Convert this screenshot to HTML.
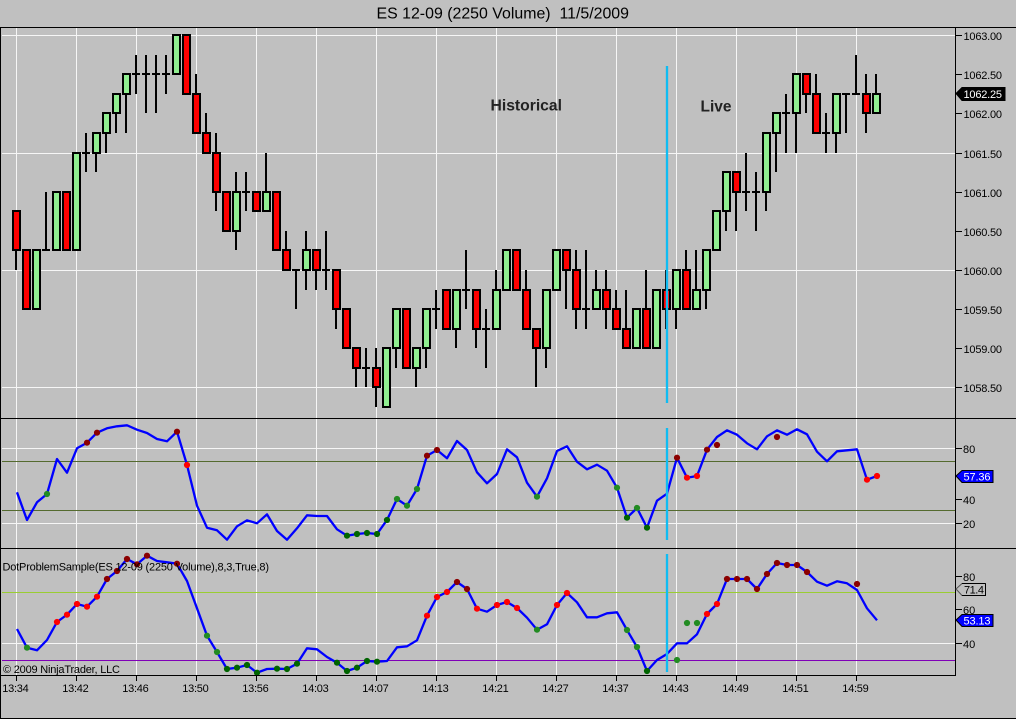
<!DOCTYPE html>
<html><head><meta charset="utf-8"><title>ES 12-09 (2250 Volume) 11/5/2009</title>
<style>
html,body{margin:0;padding:0;background:#c0c0c0;width:1016px;height:719px;overflow:hidden}
svg{display:block;font-family:"Liberation Sans",Arial,sans-serif}
text{font-size:11px;fill:#000}
.c{shape-rendering:crispEdges}
</style></head><body>
<svg width="1016" height="719" viewBox="0 0 1016 719" xmlns="http://www.w3.org/2000/svg">
<rect width="1016" height="719" fill="#c0c0c0"/>
<!-- grid -->
<path class="c" stroke="#f6f6f6" stroke-width="1" fill="none" d="M16.5 28V675M76.5 28V675M136.5 28V675M196.5 28V675M256.5 28V675M316.5 28V675M376.5 28V675M436.5 28V675M496.5 28V675M556.5 28V675M616.5 28V675M676.5 28V675M736.5 28V675M796.5 28V675M856.5 28V675M2 35.5H955M2 153.5H955M2 270.5H955M2 387.5H955M2 448.5H955M2 523.5H955M2 643.5H955"/>
<path class="c" stroke="#556b2f" fill="none" d="M2 461.5H955M2 510.5H955"/>
<path class="c" stroke="#9acd32" fill="none" d="M2 592.5H955"/>
<path class="c" stroke="#8000b8" fill="none" d="M2 660.5H955"/>
<!-- wicks -->
<path class="c" stroke="#000" stroke-width="2" fill="none" d="M16 211V270M46 192V250M86 133V172M96 133V172M106 113V153M116 94V133M126 74V133M136 55V94M146 55V113M156 55V113M166 55V94M196 74V133M206 113V153M216 133V211M236 172V250M246 172V211M266 153V211M286 231V270M296 270V309M306 231V290M316 250V290M326 231V290M336 270V329M356 348V387M366 348V387M376 348V407M396 309V368M416 348V387M426 309V368M436 290V329M456 290V348M466 250V309M476 290V348M486 309V368M496 270V329M526 270V329M536 329V387M546 290V368M566 250V309M576 250V329M586 250V329M596 270V309M606 270V329M616 290V329M626 290V348M646 270V348M666 270V329M676 270V329M686 250V309M696 250V309M706 250V309M726 172V231M736 172V231M746 153V211M756 172V231M766 133V211M776 113V172M786 94V153M796 74V153M806 74V113M816 74V133M826 113V153M836 94V153M846 94V133M856 55V94M866 74V133M876 74V113"/>
<!-- doji -->
<path class="c" stroke="#000" stroke-width="2" fill="none" d="M42 250h8M82 153h8M132 74h8M142 74h8M152 74h8M162 74h8M242 192h8M292 270h8M322 270h8M362 368h8M432 309h8M462 290h8M482 329h8M582 309h8M742 192h8M752 192h8M782 113h8M822 133h8M842 94h8M852 94h8"/>
<!-- green bodies -->
<path class="c" fill="#90ee90" stroke="#000" stroke-width="2" d="M33 250h7v59h-7zM53 192h7v58h-7zM73 153h7v97h-7zM93 133h7v20h-7zM103 113h7v20h-7zM113 94h7v19h-7zM123 74h7v20h-7zM173 35h7v39h-7zM233 192h7v39h-7zM263 192h7v19h-7zM303 250h7v20h-7zM383 348h7v59h-7zM393 309h7v39h-7zM413 348h7v20h-7zM423 309h7v39h-7zM453 290h7v39h-7zM493 290h7v39h-7zM503 250h7v40h-7zM543 290h7v58h-7zM553 250h7v40h-7zM593 290h7v19h-7zM633 309h7v39h-7zM653 290h7v58h-7zM673 270h7v39h-7zM693 290h7v19h-7zM703 250h7v40h-7zM713 211h7v39h-7zM723 172h7v39h-7zM763 133h7v59h-7zM773 113h7v20h-7zM793 74h7v39h-7zM833 94h7v39h-7zM873 94h7v19h-7z"/>
<!-- red bodies -->
<path class="c" fill="#ff0000" stroke="#000" stroke-width="2" d="M13 211h7v39h-7zM23 250h7v59h-7zM63 192h7v58h-7zM183 35h7v59h-7zM193 94h7v39h-7zM203 133h7v20h-7zM213 153h7v39h-7zM223 192h7v39h-7zM253 192h7v19h-7zM273 192h7v58h-7zM283 250h7v20h-7zM313 250h7v20h-7zM333 270h7v39h-7zM343 309h7v39h-7zM353 348h7v20h-7zM373 368h7v19h-7zM403 309h7v59h-7zM443 290h7v39h-7zM473 290h7v39h-7zM513 250h7v40h-7zM523 290h7v39h-7zM533 329h7v19h-7zM563 250h7v20h-7zM573 270h7v39h-7zM603 290h7v19h-7zM613 309h7v20h-7zM623 329h7v19h-7zM643 309h7v39h-7zM663 290h7v19h-7zM683 270h7v39h-7zM733 172h7v20h-7zM803 74h7v20h-7zM813 94h7v39h-7zM863 94h7v19h-7z"/>
<!-- panel 2 indicator -->
<polyline fill="none" stroke="#0000ff" stroke-width="2.3" stroke-linejoin="round" points="17,492.3 27,520 37,502.3 47,494 57,459 67,472.7 77,448.3 87,442.7 97,432.7 107,428.3 117,426.3 127,425.3 137,429.7 147,433 157,439 167,441.3 177,431.7 187,465 197,505.7 207,527.7 217,530.3 227,539.7 237,526.3 247,520.3 257,523.3 267,514.3 277,531 287,539.7 297,528.3 307,515.3 317,516 327,516 337,529.3 347,535.7 357,534 367,533 377,534 387,520 397,499 407,505.7 417,489 427,455.7 437,450 447,458.3 457,441 467,450 477,472.3 487,483.3 497,474 507,449.3 517,457.3 527,482.7 537,496.7 547,478.3 557,451 567,446.3 577,461.7 587,469.3 597,464.7 607,470.7 617,487.7 627,517.7 637,508 647,527.7 657,500.7 667,493.7 677,457.7 687,477.7 697,476 707,449.7 717,437 727,430.3 737,434.7 747,443.3 757,449.3 767,436.3 777,430.3 787,434.7 797,429.3 807,434.3 817,451.7 827,461.3 837,451.3 847,450.3 857,449.3 867,479.7 877,476"/>
<!-- panel 3 indicator -->
<polyline fill="none" stroke="#0000ff" stroke-width="2.3" stroke-linejoin="round" points="17,629 27,647.7 37,650.3 47,640 57,622 67,614.7 77,604 87,606.7 97,596.7 107,579 117,571 127,559 137,564.3 147,555.7 157,561 167,562.3 177,563.7 187,581 197,608.3 207,635.7 217,652 227,669 237,667.7 247,665 257,672.7 267,669 277,668.7 287,669 297,663.7 307,648.3 317,649.3 327,657 337,662.7 347,671 357,667.7 367,661 377,661.7 387,661 397,647.3 407,646.3 417,640.3 427,615.7 437,597 447,592 457,582 467,589 477,608.7 487,611.7 497,605 507,602 517,608 527,617.7 537,629.7 547,624.3 557,605 567,593 577,602.3 587,617.3 597,617.3 607,613.3 617,612.3 627,630 637,647 647,671 657,660 667,654 677,643.3 687,643.3 697,634.3 707,614 717,604 727,579 737,579 747,579 757,589 767,574 777,563 787,565 797,565 807,572 817,581.7 827,585.7 837,581.3 847,583.3 857,590 867,608.3 877,620.3"/>
<!-- dots -->
<g fill="none" stroke-width="6.2" stroke-linecap="round">
<path stroke="#ff0000" d="M187 465h0M687 477.7h0M697 476h0M867 479.7h0M877 476h0M57 622h0M67 614.7h0M77 604h0M87 606.7h0M97 596.7h0M427 615.7h0M437 597h0M447 592h0M477 608.7h0M497 605h0M507 602h0M517 608h0M557 605h0M567 593h0M707 614h0M717 604h0"/>
<path stroke="#8b0000" d="M87 442.7h0M97 432.7h0M177 431.7h0M427 455.7h0M437 450h0M677 457.7h0M707 449.7h0M717 445h0M777 437h0M107 579h0M117 571h0M127 559h0M137 564.3h0M147 555.7h0M177 563.7h0M457 582h0M467 589h0M727 579h0M737 579h0M747 579h0M757 589h0M767 574h0M777 563h0M787 565h0M797 565h0M807 572h0M857 584h0"/>
<path stroke="#228b22" d="M47 494h0M397 499h0M407 505.7h0M417 489h0M537 496.7h0M617 487.7h0M637 508h0M27 647.7h0M207 635.7h0M217 652h0M537 629.7h0M627 630h0M637 647h0M677 660h0M687 623h0M697 623h0"/>
<path stroke="#006400" d="M347 535.7h0M357 534h0M367 533h0M377 534h0M387 520h0M627 517.7h0M647 527.7h0M227 669h0M237 667.7h0M247 665h0M257 672.7h0M277 668.7h0M287 669h0M297 663.7h0M337 662.7h0M347 671h0M357 667.7h0M367 661h0M377 661.7h0M647 671h0"/>
</g>
<!-- vertical markers -->
<path stroke="#4cb3d8" stroke-width="3" stroke-opacity=".45" fill="none" d="M667 66V403M667 428V540M667 554V672"/>
<path class="c" stroke="#0fbcf2" stroke-width="2" fill="none" d="M667 66V403M667 428V540M667 554V672"/>
<!-- frame -->
<path class="c" stroke="#000" stroke-width="1" fill="none" d="M0 27.5H1016M0 418.5H1016M0 548.5H1016M0 675.5H955.5M0 718.5H1016M.5 27V719M955.5 27V676M955 35.5h7M955 74.5h7M955 113.5h7M955 153.5h7M955 192.5h7M955 231.5h7M955 270.5h7M955 309.5h7M955 348.5h7M955 387.5h7M955 448.5h7M955 499.5h7M955 523.5h7M955 576.5h7M955 609.5h7M955 643.5h7M16.5 676V681M76.5 676V681M136.5 676V681M196.5 676V681M256.5 676V681M316.5 676V681M376.5 676V681M436.5 676V681M496.5 676V681M556.5 676V681M616.5 676V681M676.5 676V681M736.5 676V681M796.5 676V681M856.5 676V681"/>
<!-- flags -->
<path d="M956 93.5L962 87.5H1005V100.5H962Z" fill="#000" stroke="#000"/>
<path d="M956 476L962 470.5H993V482.5H962Z" fill="#0000ff" stroke="#000"/>
<path d="M956 589L962 583.5H985.5V595.5H962Z" fill="#c0c0c0" stroke="#555"/>
<path d="M985.5 583.5V595.5H962M962 583.5H985.5" fill="none" stroke="#000"/>
<path d="M956 620L962 614.5H993V626.5H962Z" fill="#0000ff" stroke="#000"/>
<!-- title / notes -->
<text x="376.5" y="18.5" style="font-size:15.8px" textLength="252.5" lengthAdjust="spacingAndGlyphs" xml:space="preserve">ES 12-09 (2250 Volume)  11/5/2009</text>
<text x="490.5" y="110.5" style="font-size:16px;font-weight:bold;fill:#222" textLength="71.5" lengthAdjust="spacingAndGlyphs">Historical</text>
<text x="700.5" y="111.5" style="font-size:16px;font-weight:bold;fill:#222" textLength="31" lengthAdjust="spacingAndGlyphs">Live</text>
<!-- price axis -->
<g>
<text x="963.5" y="40" textLength="38.5" lengthAdjust="spacing">1063.00</text>
<text x="963.5" y="79" textLength="38.5" lengthAdjust="spacing">1062.50</text>
<text x="963.5" y="118" textLength="38.5" lengthAdjust="spacing">1062.00</text>
<text x="963.5" y="158" textLength="38.5" lengthAdjust="spacing">1061.50</text>
<text x="963.5" y="197" textLength="38.5" lengthAdjust="spacing">1061.00</text>
<text x="963.5" y="236" textLength="38.5" lengthAdjust="spacing">1060.50</text>
<text x="963.5" y="275" textLength="38.5" lengthAdjust="spacing">1060.00</text>
<text x="963.5" y="314" textLength="38.5" lengthAdjust="spacing">1059.50</text>
<text x="963.5" y="353" textLength="38.5" lengthAdjust="spacing">1059.00</text>
<text x="963.5" y="392" textLength="38.5" lengthAdjust="spacing">1058.50</text>
<text x="963.5" y="98" textLength="38.5" lengthAdjust="spacing" style="fill:#fff">1062.25</text>
<text x="963" y="453">80</text>
<text x="963" y="504">40</text>
<text x="963" y="528">20</text>
<text x="963.5" y="480.5" textLength="27" lengthAdjust="spacing" style="fill:#fff">57.36</text>
<text x="963" y="581">80</text>
<text x="963" y="614">60</text>
<text x="963" y="648">40</text>
<text x="964" y="593.5" textLength="20" lengthAdjust="spacing">71.4</text>
<text x="963.5" y="624.5" textLength="27" lengthAdjust="spacing" style="fill:#fff">53.13</text>
</g>
<!-- time axis -->
<g text-anchor="middle">
<text x="15.5" y="692" textLength="26.5">13:34</text>
<text x="75.5" y="692" textLength="26.5">13:42</text>
<text x="135.5" y="692" textLength="26.5">13:46</text>
<text x="195.5" y="692" textLength="26.5">13:50</text>
<text x="255.5" y="692" textLength="26.5">13:56</text>
<text x="315.5" y="692" textLength="26.5">14:03</text>
<text x="375.5" y="692" textLength="26.5">14:07</text>
<text x="435.5" y="692" textLength="26.5">14:13</text>
<text x="495.5" y="692" textLength="26.5">14:21</text>
<text x="555.5" y="692" textLength="26.5">14:27</text>
<text x="615.5" y="692" textLength="26.5">14:37</text>
<text x="675.5" y="692" textLength="26.5">14:43</text>
<text x="735.5" y="692" textLength="26.5">14:49</text>
<text x="795.5" y="692" textLength="26.5">14:51</text>
<text x="855.5" y="692" textLength="26.5">14:59</text>
</g>
<text x="2.5" y="570.5" textLength="266.5" lengthAdjust="spacing">DotProblemSample(ES 12-09 (2250 Volume),8,3,True,8)</text>
<text x="3" y="673" textLength="117" lengthAdjust="spacing">© 2009 NinjaTrader, LLC</text>
</svg>
</body></html>
